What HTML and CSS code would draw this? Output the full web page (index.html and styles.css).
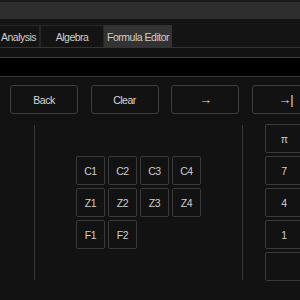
FILE: index.html
```html
<!DOCTYPE html>
<html lang="en">
<head>
    <meta charset="UTF-8">
    <title>Formula Editor</title>
    <link rel="stylesheet" href="styles.css">
</head>
<body>
    <div class="topbar"></div>

    <div class="tabs">
        <div class="tab first">Analysis</div>
        <div class="tab">Algebra</div>
        <div class="tab active">Formula Editor</div>
    </div>

    <div class="formula-line"></div>

    <div class="actions">
        <button class="btn">Back</button>
        <button class="btn">Clear</button>
        <button class="btn arrow">&rarr;</button>
        <button class="btn arrow">&rarr;|</button>
    </div>

    <div class="panel">
        <div class="side"></div>
        <div class="center">
            <div class="keys">
                <button class="key">C1</button>
                <button class="key">C2</button>
                <button class="key">C3</button>
                <button class="key">C4</button>
                <button class="key">Z1</button>
                <button class="key">Z2</button>
                <button class="key">Z3</button>
                <button class="key">Z4</button>
                <button class="key">F1</button>
                <button class="key">F2</button>
            </div>
        </div>
        <div class="numpad">
            <button class="key wide">&pi;</button>
            <button class="key wide">7</button>
            <button class="key wide">4</button>
            <button class="key wide">1</button>
            <button class="key wide"></button>
        </div>
    </div>
</body>
</html>
```

FILE: styles.css
```css
/* Formula editor, dark theme */
body {
    font-family: "Liberation Sans", Arial, sans-serif;
    font-size: 10.5px;
    letter-spacing: -0.5px;
    background-color: #121212;
    color: #d4d4d4;
    margin: 0;
    overflow: hidden;
}
.topbar {
    height: 17px;
    background-color: #2e2e2e;
    border-top: 2px solid #1c1c1c;
}
.tabs {
    display: flex;
    background-color: #141414;
    padding-top: 6px;
    border-bottom: 1px solid #333;
    height: 22px;
}
.tab {
    min-width: 58px;
    padding: 0 2px;
    height: 21px;
    line-height: 22px;
    text-align: center;
    border: 1px solid #262626;
    border-bottom: none;
    white-space: nowrap;
    color: #cfcfcf;
}
.tab.first {
    min-width: 0;
    padding: 0 3px 0 0;
    border-left: none;
    padding-left: 1px;
}
.tab.active {
    background-color: #333;
    border-color: #333;
}
.formula-line {
    margin-top: 9px;
    height: 18px;
    background-color: #000;
    border-top: 1px solid #3c3c3c;
    border-bottom: 1px solid #333;
}
.actions {
    display: flex;
    gap: 12.5px;
    padding: 8px 0 0 10px;
}
.btn {
    flex: none;
    width: 68px;
    height: 29px;
    background-color: #121212;
    color: #d8d8d8;
    border: 1px solid #3e3e3e;
    border-radius: 3px;
    font-family: inherit;
    font-size: 10.5px;
    letter-spacing: inherit;
    padding: 0;
}
.btn.arrow {
    font-size: 13px;
    letter-spacing: -1px;
}
.panel {
    display: flex;
    margin-top: 10px;
    height: 157px;
}
.side {
    width: 34px;
    flex: none;
}
.center {
    width: 207px;
    flex: none;
    margin: 1px 0;
    border-left: 1px solid #3a3a3a;
    border-right: 1px solid #3a3a3a;
    display: flex;
    align-items: center;
    justify-content: center;
}
.keys {
    display: grid;
    grid-template-columns: repeat(4, 29px);
    grid-auto-rows: 29px;
    gap: 3px;
}
.key {
    background-color: #121212;
    color: #cfcfcf;
    border: 1px solid #3a3a3a;
    border-radius: 2px;
    font-family: inherit;
    font-size: 10.5px;
    letter-spacing: inherit;
    padding: 0;
}
.numpad {
    display: flex;
    flex-direction: column;
    gap: 3px;
    padding-left: 22px;
}
.key.wide {
    width: 38px;
    height: 29px;
    flex: none;
}
```
